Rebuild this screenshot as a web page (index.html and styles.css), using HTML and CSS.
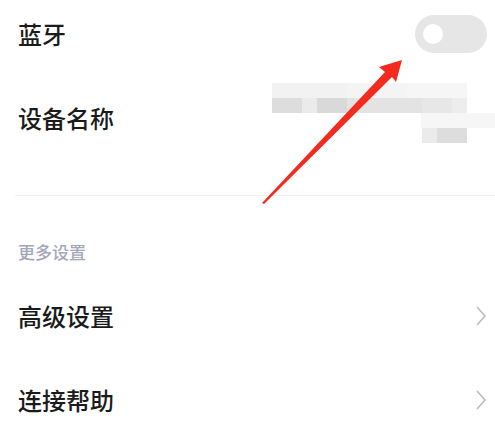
FILE: index.html
```html
<!DOCTYPE html>
<html lang="zh-CN">
<head>
  <meta charset="UTF-8" />
  <meta name="viewport" content="width=device-width, initial-scale=1" />
  <title>蓝牙</title>
  <link rel="stylesheet" href="styles.css">
</head>
<body>

  <div class="page">
    <div class="row row-switch">
      <span class="label">蓝牙</span>
      <div class="toggle"><div class="knob"></div></div>
    </div>

    <div class="row row-name">
      <span class="label">设备名称</span>
      <!-- nom de l'appareil masqué (mosaïque) -->
      <div class="mosaic">
        <div class="line">
          <span class="seg w5 c7"></span><span class="seg w4 c8"></span><span class="seg w4 c9"></span>
        </div>
        <div class="line">
          <span class="seg w2 c2"></span><span class="seg w1 c6"></span><span class="seg w2 c1"></span>
          <span class="seg w5 c3"></span><span class="seg w2 c4"></span><span class="seg w1 c5"></span>
        </div>
        <div class="line">
          <span class="seg w10"></span><span class="seg w5 c9"></span>
        </div>
        <div class="line">
          <span class="seg w10"></span><span class="seg w1 c6"></span><span class="seg w2 c2"></span>
        </div>
      </div>
    </div>

    <div class="divider"></div>

    <div class="section-title">更多设置</div>

    <div class="row row-link">
      <span class="label">高级设置</span>
      <svg class="chevron" viewBox="0 0 12 20" width="12" height="20"><polyline points="2,1 10,10 2,19" /></svg>
    </div>

    <div class="row row-link">
      <span class="label">连接帮助</span>
      <svg class="chevron" viewBox="0 0 12 20" width="12" height="20"><polyline points="2,1 10,10 2,19" /></svg>
    </div>
  </div>

  <!-- flèche rouge d'annotation -->
  <svg class="arrow" viewBox="0 0 495 425" width="495" height="425">
    <polygon points="262,203 385,72 379,67 402,60 396,82 392,77 264,204" />
  </svg>

</body>
</html>
```

FILE: styles.css
```css
:root {
  --text-color: #1b1b1b;
  --muted-color: #a4a7ba;
  --toggle-bg: #e6e6e6;
  --divider-color: #efefef;
  --chevron-color: #bcbcbc;
  --arrow-color: #f42a1e;
  --font-main: 'Noto Sans CJK SC', 'Noto Sans', sans-serif;
}

html, body {
  margin: 0;
  background: #fff;
  overflow: hidden;
}

body {
  font-family: var(--font-main);
  color: var(--text-color);
  width: 495px;
  height: 425px;
  position: relative;
}

.row {
  display: flex;
  align-items: center;
  justify-content: space-between;
  padding: 0 8px 0 18px;
}

.label {
  font-size: 24px;
  line-height: 30px;
  font-weight: 500;
}

.row-switch {
  height: 68px;
}

.toggle {
  width: 72px;
  height: 38px;
  border-radius: 19px;
  background: var(--toggle-bg);
  display: flex;
  align-items: center;
  padding-left: 8px;
  box-sizing: border-box;
}

.knob {
  width: 20px;
  height: 20px;
  border-radius: 50%;
  background: #fff;
}

.row-name {
  height: 100px;
  padding-right: 0;
}

.mosaic {
  align-self: flex-start;
  margin-top: 15px;
  width: 223px;
}

.mosaic .line {
  display: flex;
  height: 15px;
}

.seg { display: block; height: 15px; }
.w1 { width: 15px; }
.w2 { width: 30px; }
.w4 { width: 60px; }
.w5 { width: 75px; }
.w10 { width: 150px; }

.c1 { background: #d9d9d9; }
.c2 { background: #dddddd; }
.c3 { background: #e3e3e3; }
.c4 { background: #e7e7e7; }
.c5 { background: #ededed; }
.c6 { background: #ebebeb; }
.c7 { background: #f2f2f2; }
.c8 { background: #f4f4f4; }
.c9 { background: #f6f6f6; }

.divider {
  height: 1px;
  margin: 27px 0 0 15px;
  background: var(--divider-color);
}

.section-title {
  margin: 45px 0 0 18px;
  font-size: 17px;
  line-height: 22px;
  font-weight: 500;
  color: var(--muted-color);
}

.row-link {
  height: 84px;
}

.section-title + .row-link {
  margin-top: 11px;
}

.chevron {
  fill: none;
  stroke: var(--chevron-color);
  stroke-width: 1.6;
}

.arrow {
  position: absolute;
  top: 0;
  left: 0;
  pointer-events: none;
}

.arrow polygon {
  fill: var(--arrow-color);
}
```
